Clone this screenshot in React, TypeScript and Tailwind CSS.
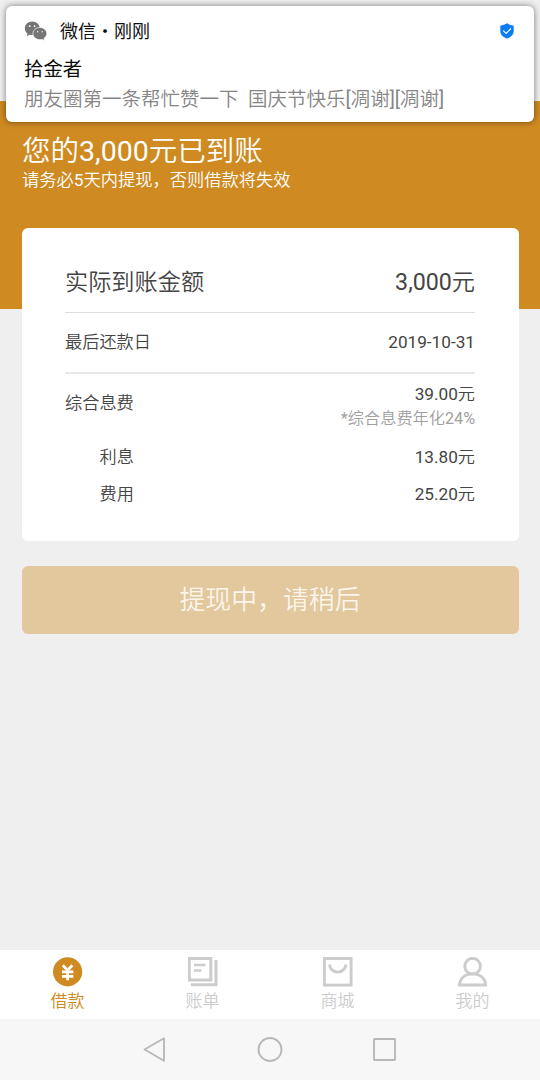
import React from 'react';

const WechatIcon = () => (
    <svg width="23" height="20" viewBox="0 0 23 20" fill="#757575">
        <path d="M8.2 0.5C4 0.5 0.8 3.500 0.8 7.300c0 2.200 1 4.100 2.700 5.300l-.7 2.700 2.900-1.500c.8.200 1.600.3 2.500.3 4.300 0 7.600-3 7.600-6.800S12.500.5 8.200.5z" />
        <circle cx="5.7" cy="5.2" r="0.9" fill="#fff" />
        <circle cx="10.6" cy="5.2" r="0.9" fill="#fff" />
        <path d="M15.9 6.500c-3.900 0-7 2.700-7 6.100s3.100 6.100 7 6.100c.8 0 1.600-.1 2.300-.3l2.400 1.200-.6-2.200c1.700-1.100 2.800-2.800 2.800-4.800 0-3.400-3.100-6.100-6.900-6.100z" stroke="#fff" strokeWidth="0.7" />
        <circle cx="13.7" cy="10.8" r="0.7" fill="#fff" />
        <circle cx="18.2" cy="10.8" r="0.7" fill="#fff" />
    </svg>
);

const ShieldIcon = () => (
    <svg width="14" height="16" viewBox="0 0 14 16" fill="none">
        <path d="M7 0.3C5.3 1.5 3 2.2 1 2.4Q0.3 2.500 0.3 3.2v4.800c0 3.800 2.700 6.200 6.700 7.600 4-1.400 6.700-3.800 6.700-7.600V3.200Q13.700 2.500 13 2.400C11 2.200 8.700 1.500 7 .3z" fill="#0a7cf5" />
        <path d="M3.2 7.600l2.900 2.800 4.900-4.900" stroke="#fff" strokeWidth="1.1" />
    </svg>
);

const LoanIcon = () => (
    <svg width="30" height="30" viewBox="0 0 30 30" fill="none">
        <circle cx="14.6" cy="14.8" r="14.6" fill="#cf8a22" />
        <path d="M9.8 8.3l4.800 5 4.800-5M14.600 13v10.200M9 14.900h11.400M9 19.300h11.400" stroke="#fff" strokeWidth="2.7" />
    </svg>
);

const BillIcon = () => (
    <svg width="30" height="30" viewBox="0 0 30 30" fill="none" stroke="#cccccc" strokeWidth="3">
        <rect x="1.3" y="1.5" width="21.5" height="21.5" />
        <path d="M28 3v24.700H3" />
        <path d="M6 8h11.500M6 13.500h7.500" strokeWidth="2.6" />
    </svg>
);

const MallIcon = () => (
    <svg width="30" height="30" viewBox="0 0 30 30" fill="none" stroke="#cccccc" strokeWidth="2.9">
        <rect x="1.3" y="1.5" width="26.8" height="26.6" />
        <path d="M6.6 7.500a8 7.500 0 0 0 16.200 0" />
    </svg>
);

const MineIcon = () => (
    <svg width="30" height="30" viewBox="0 0 30 30" fill="none" stroke="#cccccc" strokeWidth="2.9">
        <circle cx="14.6" cy="9.2" r="7.8" />
        <path d="M1.5 28c.3-6.500 5.400-11.100 13.100-11.100S27.400 21.500 27.700 28z" />
    </svg>
);

const tabs = [
    { label: '借款', icon: <LoanIcon />, color: 'text-[#cf8a22]' },
    { label: '账单', icon: <BillIcon />, color: 'text-[#cccccc]' },
    { label: '商城', icon: <MallIcon />, color: 'text-[#cccccc]' },
    { label: '我的', icon: <MineIcon />, color: 'text-[#cccccc]' },
];

const App = () => {
    return (
        <div className="relative flex h-[1080px] w-[540px] flex-col overflow-hidden bg-[#efefef] font-[Roboto,'Noto_Sans_CJK_SC_DemiLight','Noto_Sans_CJK_SC',sans-serif] text-[#444444]">
            {/* Notification */}
            <div className="absolute left-1.5 top-1.5 z-10 h-[116px] w-[528px] rounded-md bg-white px-[18px] pt-[13px] font-[Roboto,'Noto_Sans_CJK_SC',sans-serif] shadow-[0_0_6px_rgba(0,0,0,0.5)]">
                <div className="flex h-6 items-center pr-0.5">
                    <WechatIcon />
                    <span className="ml-[13px] flex-1 whitespace-pre text-[18px] font-normal text-[#111111]">微信・刚刚</span>
                    <ShieldIcon />
                </div>
                <div className="mt-[13px] h-7 text-[19.4px] leading-7 font-normal text-[#0c0c0c]">拾金者</div>
                <div className="mt-[2px] h-7 whitespace-pre text-[19.5px] leading-7 font-[350] text-[#858585]">朋友圈第一条帮忙赞一下  国庆节快乐<span className="font-normal">[</span>凋谢<span className="font-normal">][</span>凋谢<span className="font-normal">]</span></div>
            </div>

            {/* Header */}
            <div className="mt-[101px] h-[208px] shrink-0 bg-[#cf8a22] px-[22px] pt-[33px] text-white">
                <h1 className="h-9 text-[28.5px] leading-9 font-normal">您的3,000元已到账</h1>
                <p className="-mt-[2px] text-[17.25px] leading-6">请务必5天内提现，否则借款将失效</p>
            </div>

            {/* Loan detail */}
            <div className="relative mx-[21.5px] -mt-[81px] h-[313px] shrink-0 rounded-md bg-white px-[43.5px] pt-6 text-[17.2px]">
                <div className="flex h-[61px] items-center justify-between border-b border-[#dddddd] pt-px text-[23.2px]">
                    <span>实际到账金额</span>
                    <span>3,000元</span>
                </div>
                <div className="flex h-[61px] items-center justify-between border-b-2 border-[#e8e8e8]">
                    <span>最后还款日</span>
                    <span>2019-10-31</span>
                </div>
                <div className="flex h-[65px] justify-between pt-2">
                    <span className="pt-[9px] leading-6">综合息费</span>
                    <div className="text-right">
                        <div className="leading-6">39.00元</div>
                        <div className="text-[16.2px] leading-[26px] text-[#a0a0a0]">*综合息费年化24%</div>
                    </div>
                </div>
                <div className="flex h-[37px] items-center justify-between pl-[34.5px]">
                    <span>利息</span>
                    <span>13.80元</span>
                </div>
                <div className="flex h-[38px] items-center justify-between pl-[34.5px]">
                    <span>费用</span>
                    <span>25.20元</span>
                </div>
            </div>

            <button className="mx-[21.5px] mt-[25px] h-[68px] shrink-0 rounded-md bg-[#e3c79d] text-[25.9px] text-[#fbf5ec]">
                提现中，请稍后
            </button>

            {/* Tab bar */}
            <div className="mt-auto grid h-[69px] shrink-0 grid-cols-4 bg-white pt-[7px]">
                {tabs.map((tab) => (
                    <div key={tab.label} className={`flex flex-col items-center ${tab.color}`}>
                        {tab.icon}
                        <span className="mt-0.5 text-[17px] leading-6">{tab.label}</span>
                    </div>
                ))}
            </div>

            {/* System navigation */}
            <div className="flex h-[61px] shrink-0 items-center justify-center bg-[#f7f7f7]">
                <svg width="256" height="30" viewBox="0 0 256 30" fill="none" stroke="#b8b8b8" strokeWidth="1.9" strokeLinejoin="round">
                    <path d="M2.5 14.500L22 3.300v22.400z" />
                    <circle cx="128" cy="14.500" r="11.500" />
                    <rect x="232" y="4" width="21" height="21" rx="0.5" />
                </svg>
            </div>
        </div>
    );
};

export default App;
